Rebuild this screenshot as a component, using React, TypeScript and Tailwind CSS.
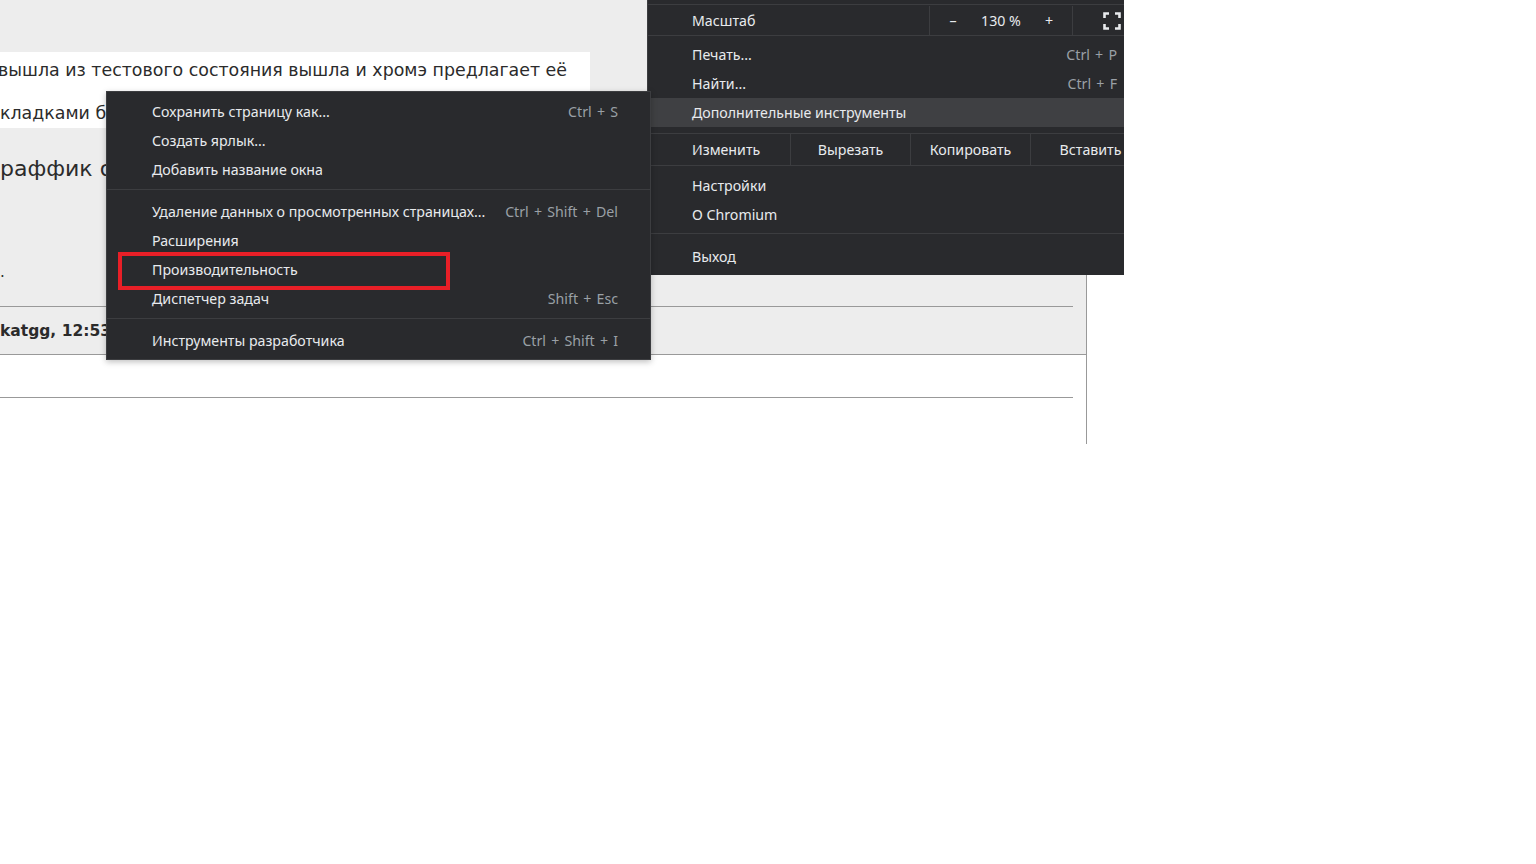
const menuFont = { fontFamily: '"Noto Sans", "Open Sans", sans-serif' };
const pageFont = { fontFamily: '"DejaVu Sans", Verdana, sans-serif' };

type ItemProps = {
  label: string;
  shortcut?: string;
  active?: boolean;
  padLeft: string;
  padRight: string;
  lift?: boolean;
};

function Item({ label, shortcut, active, padLeft, padRight, lift }: ItemProps) {
  return (
    <div
      className={`flex h-[29px] items-center justify-between ${padLeft} ${padRight} ${
        lift ? "pb-[2px]" : ""
      } ${active ? "bg-[#3f4043]" : ""}`}
    >
      <span className="text-[#e8eaed]">{label}</span>
      {shortcut ? (
        <span className="whitespace-nowrap text-[#9aa0a6] [word-spacing:1.5px]">{shortcut}</span>
      ) : null}
    </div>
  );
}

function Separator({ top, bottom }: { top: string; bottom: string }) {
  return (
    <div className={`${top} ${bottom}`}>
      <div className="h-px bg-[#3c3d40]" />
    </div>
  );
}

function FullscreenIcon() {
  return (
    <svg width="18" height="18" viewBox="0 0 18 18" fill="none">
      <path
        d="M1.5 6V1.5H6M12 1.5h4.5V6M16.5 12v4.5H12M6 16.5H1.5V12"
        stroke="#e8eaed"
        strokeWidth="2.6"
      />
    </svg>
  );
}

function MoreToolsMenu() {
  const row = (label: string, shortcut?: string) => (
    <Item
      label={label}
      shortcut={shortcut}
      padLeft="pl-[45px]"
      padRight="pr-[32px]"
      lift
    />
  );
  return (
    <div
      className="absolute left-[106px] top-[91px] w-[545px] border border-[#3c3d40] bg-[#292a2d] pb-[3px] pt-[6px] text-[14.2px] shadow-[0_2px_6px_rgba(0,0,0,0.25)]"
      style={menuFont}
    >
      {row("Сохранить страницу как...", "Ctrl + S")}
      {row("Создать ярлык...")}
      {row("Добавить название окна")}
      <Separator top="pt-[4px]" bottom="pb-[8px]" />
      {row("Удаление данных о просмотренных страницах...", "Ctrl + Shift + Del")}
      {row("Расширения")}
      {row("Производительность")}
      {row("Диспетчер задач", "Shift + Esc")}
      <Separator top="pt-[4px]" bottom="pb-[8px]" />
      {row("Инструменты разработчика", "Ctrl + Shift + I")}
    </div>
  );
}

function ChromeMenu() {
  const row = (label: string, shortcut?: string, active?: boolean) => (
    <Item
      label={label}
      shortcut={shortcut}
      active={active}
      padLeft="pl-[44px]"
      padRight="pr-[33px]"
    />
  );
  return (
    <div className="absolute left-[647px] top-0 h-[275px] w-[477px] overflow-hidden">
      <div
        className="w-[504px] border-x border-b border-[#3c3d40] bg-[#292a2d] pb-[4px] text-[14.2px] text-[#e8eaed]"
        style={menuFont}
      >
        <div className="h-[4px]" />
        <div className="h-px bg-[#3c3d40]" />
        <div className="flex h-[30px] items-center pt-[1px]">
          <div className="flex-1 pl-[44px]">Масштаб</div>
          <div className="flex h-full items-center border-l border-[#3c3d40]">
            <span className="w-[46px] text-center">–</span>
            <span className="w-[50px] text-center">130 %</span>
            <span className="w-[46px] text-center">+</span>
          </div>
          <div className="flex h-full w-[78px] items-center justify-center border-l border-[#3c3d40]">
            <FullscreenIcon />
          </div>
        </div>
        <Separator top="pt-0" bottom="pb-[4px]" />
        {row("Печать...", "Ctrl + P")}
        {row("Найти...", "Ctrl + F")}
        {row("Дополнительные инструменты", undefined, true)}
        <Separator top="pt-[6px]" bottom="pb-0" />
        <div className="flex h-[31px] items-center">
          <div className="w-[142px] pl-[44px]">Изменить</div>
          <div className="flex h-full w-[120px] items-center justify-center border-l border-[#3c3d40]">
            Вырезать
          </div>
          <div className="flex h-full w-[120px] items-center justify-center border-l border-[#3c3d40]">
            Копировать
          </div>
          <div className="flex h-full w-[120px] items-center justify-center border-l border-[#3c3d40]">
            Вставить
          </div>
        </div>
        <Separator top="pt-0" bottom="pb-[5px]" />
        {row("Настройки")}
        {row("О Chromium")}
        <Separator top="pt-[4px]" bottom="pb-[8px]" />
        {row("Выход")}
      </div>
    </div>
  );
}

function PageBehind() {
  return (
    <div
      className="h-[444px] w-[1087px] border-r border-[#999999] text-[#2b2b2b]"
      style={pageFont}
    >
      <div className="h-[355px] border-b border-[#999999] bg-[#ededed] pt-[52px]">
        <div className="w-[590px] bg-white pb-[3px] pt-[6px] text-[17.4px]">
          <div className="flex h-[24px] items-center justify-end overflow-hidden whitespace-nowrap pr-[23px]">
            вышла из тестового состояния вышла и хромэ предлагает её
          </div>
          <div className="mt-[19px] flex h-[24px] items-center overflow-hidden whitespace-nowrap">
            кладками будет удобнее
          </div>
        </div>
        <div className="mt-[25px] flex h-[30px] items-center whitespace-nowrap text-[22px]">
          раффик о
        </div>
        <div className="mt-[79px] h-[20px] text-[15px] leading-[20px]">.</div>
        <div className="mt-[24px] w-[1073px] border-t border-[#999999]" />
        <div className="flex h-[47px] items-center whitespace-nowrap pt-[2px] text-[15.5px] font-bold">
          katgg, 12:53
        </div>
      </div>
      <div className="mt-[42px] w-[1073px] border-t border-[#999999]" />
    </div>
  );
}

export default function App() {
  return (
    <div className="relative h-[864px] w-full overflow-hidden bg-white">
      <PageBehind />
      <ChromeMenu />
      <MoreToolsMenu />
      <div className="absolute left-[118px] top-[252px] h-[38px] w-[332px] border-[4px] border-[#e81f27]" />
    </div>
  );
}
